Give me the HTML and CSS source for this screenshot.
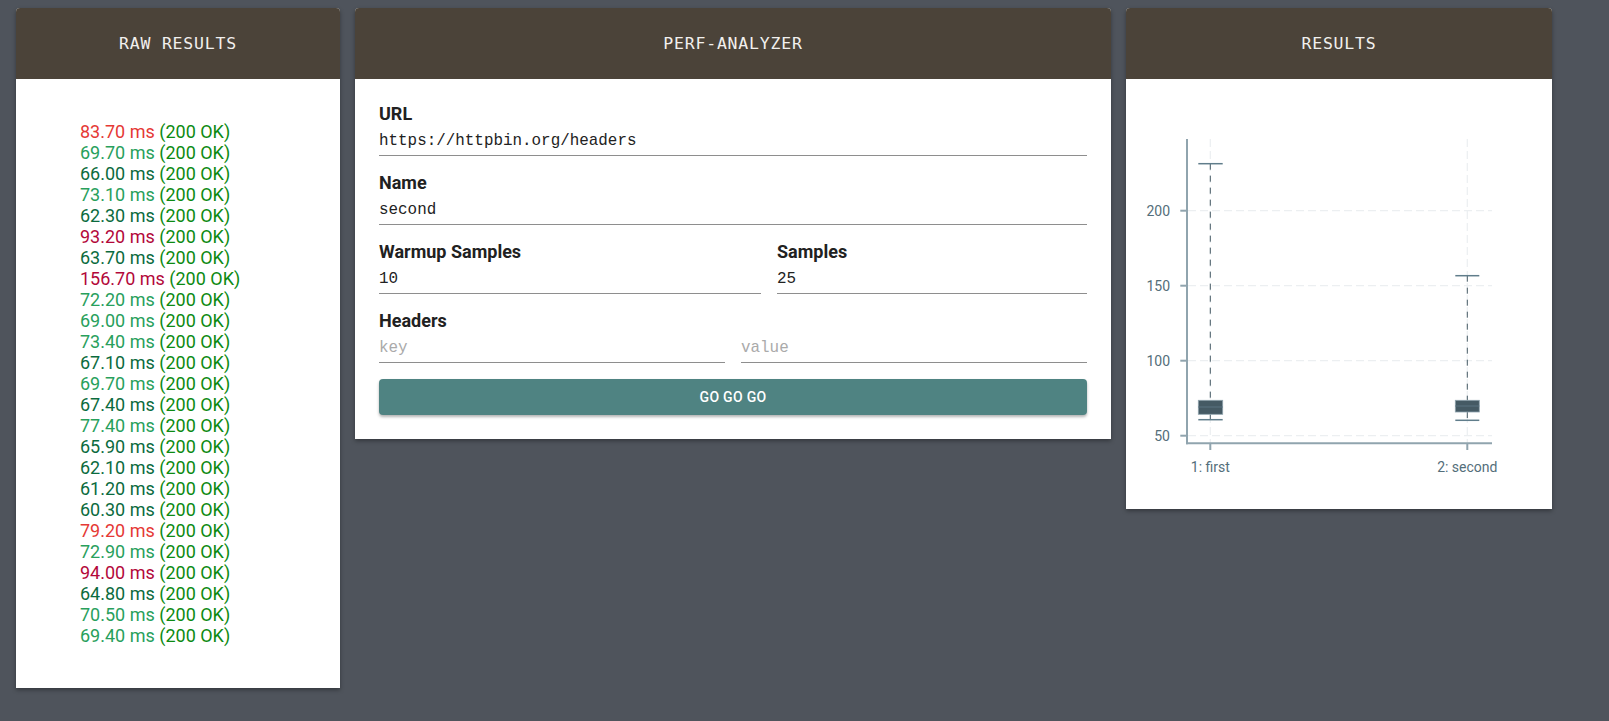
FILE: index.html
```html
<!DOCTYPE html>
<html>
<head>
<meta charset="utf-8">
<link rel="stylesheet" href="styles.css">
</head>
<body>
<div class="layout">
  <section class="card card-raw">
    <header class="card-head">RAW RESULTS</header>
    <div class="card-body raw-body">
      <ul class="raw-list">
        <li><span class="t-red">83.70 ms</span> <span class="ok">(200 OK)</span></li>
        <li><span class="t-light">69.70 ms</span> <span class="ok">(200 OK)</span></li>
        <li><span class="t-dark">66.00 ms</span> <span class="ok">(200 OK)</span></li>
        <li><span class="t-light">73.10 ms</span> <span class="ok">(200 OK)</span></li>
        <li><span class="t-dark">62.30 ms</span> <span class="ok">(200 OK)</span></li>
        <li><span class="t-crimson">93.20 ms</span> <span class="ok">(200 OK)</span></li>
        <li><span class="t-dark">63.70 ms</span> <span class="ok">(200 OK)</span></li>
        <li><span class="t-crimson">156.70 ms</span> <span class="ok">(200 OK)</span></li>
        <li><span class="t-light">72.20 ms</span> <span class="ok">(200 OK)</span></li>
        <li><span class="t-light">69.00 ms</span> <span class="ok">(200 OK)</span></li>
        <li><span class="t-light">73.40 ms</span> <span class="ok">(200 OK)</span></li>
        <li><span class="t-dark">67.10 ms</span> <span class="ok">(200 OK)</span></li>
        <li><span class="t-light">69.70 ms</span> <span class="ok">(200 OK)</span></li>
        <li><span class="t-dark">67.40 ms</span> <span class="ok">(200 OK)</span></li>
        <li><span class="t-light">77.40 ms</span> <span class="ok">(200 OK)</span></li>
        <li><span class="t-dark">65.90 ms</span> <span class="ok">(200 OK)</span></li>
        <li><span class="t-dark">62.10 ms</span> <span class="ok">(200 OK)</span></li>
        <li><span class="t-dark">61.20 ms</span> <span class="ok">(200 OK)</span></li>
        <li><span class="t-dark">60.30 ms</span> <span class="ok">(200 OK)</span></li>
        <li><span class="t-red">79.20 ms</span> <span class="ok">(200 OK)</span></li>
        <li><span class="t-light">72.90 ms</span> <span class="ok">(200 OK)</span></li>
        <li><span class="t-crimson">94.00 ms</span> <span class="ok">(200 OK)</span></li>
        <li><span class="t-dark">64.80 ms</span> <span class="ok">(200 OK)</span></li>
        <li><span class="t-light">70.50 ms</span> <span class="ok">(200 OK)</span></li>
        <li><span class="t-light">69.40 ms</span> <span class="ok">(200 OK)</span></li>
      </ul>
    </div>
  </section>

  <section class="card card-form">
    <header class="card-head">PERF-ANALYZER</header>
    <div class="card-body form-body">
      <div class="field">
        <label class="field-label">URL</label>
        <input class="field-input" type="text" value="https://httpbin.org/headers">
      </div>
      <div class="field">
        <label class="field-label">Name</label>
        <input class="field-input" type="text" value="second">
      </div>
      <div class="field-row">
        <div class="field field-warmup">
          <label class="field-label">Warmup Samples</label>
          <input class="field-input" type="text" value="10">
        </div>
        <div class="field field-grow">
          <label class="field-label">Samples</label>
          <input class="field-input" type="text" value="25">
        </div>
      </div>
      <div class="field">
        <label class="field-label">Headers</label>
        <div class="field-row tight">
          <input class="field-input half" type="text" placeholder="key">
          <input class="field-input half" type="text" placeholder="value">
        </div>
      </div>
      <button class="go-btn" type="button">GO GO GO</button>
    </div>
  </section>

  <section class="card card-chart">
    <header class="card-head">RESULTS</header>
    <div class="card-body chart-body">
      <svg class="chart" width="426" height="430" viewBox="0 0 426 430">
        <g class="grid">
          <line x1="62" y1="131.7" x2="366" y2="131.7"/>
          <line x1="62" y1="206.7" x2="366" y2="206.7"/>
          <line x1="62" y1="281.7" x2="366" y2="281.7"/>
          <line x1="62" y1="356.7" x2="366" y2="356.7"/>
          <line x1="84.3" y1="60" x2="84.3" y2="364"/>
          <line x1="341.3" y1="60" x2="341.3" y2="364"/>
        </g>
        <g class="ticks">
          <line x1="54.3" y1="131.7" x2="61" y2="131.7"/>
          <line x1="54.3" y1="206.7" x2="61" y2="206.7"/>
          <line x1="54.3" y1="281.7" x2="61" y2="281.7"/>
          <line x1="54.3" y1="356.7" x2="61" y2="356.7"/>
          <line x1="84.3" y1="365" x2="84.3" y2="371"/>
          <line x1="341.3" y1="365" x2="341.3" y2="371"/>
        </g>
        <g class="ylabels">
          <text x="44" y="136.5">200</text>
          <text x="44" y="211.5">150</text>
          <text x="44" y="286.5">100</text>
          <text x="44" y="361.5">50</text>
        </g>
        <g class="xlabels">
          <text x="84.3" y="393">1: first</text>
          <text x="341.3" y="393">2: second</text>
        </g>
        <g class="whisker">
          <line x1="84.3" y1="84.7" x2="84.3" y2="321.3"/>
          <line x1="84.3" y1="335.3" x2="84.3" y2="340.7"/>
          <line x1="341.3" y1="196.7" x2="341.3" y2="321.3"/>
          <line x1="341.3" y1="333" x2="341.3" y2="341.3"/>
        </g>
        <g class="caps">
          <line x1="72.3" y1="84.7" x2="96.7" y2="84.7"/>
          <line x1="72.3" y1="340.7" x2="96.7" y2="340.7"/>
          <line x1="329.3" y1="196.7" x2="353.3" y2="196.7"/>
          <line x1="329.3" y1="341.3" x2="353.3" y2="341.3"/>
        </g>
        <g class="boxes">
          <rect x="72.3" y="321.3" width="24.4" height="14"/>
          <rect x="329.3" y="321.3" width="24" height="11.7"/>
        </g>
        <g class="medians">
          <line x1="72.3" y1="328" x2="96.7" y2="328"/>
          <line x1="329.3" y1="327" x2="353.3" y2="327"/>
        </g>
        <g class="axes">
          <line x1="61" y1="60" x2="61" y2="365.3"/>
          <line x1="60" y1="364.3" x2="366" y2="364.3"/>
        </g>
      </svg>
    </div>
  </section>
</div>
</body>
</html>
```

FILE: styles.css
```css
html, body {
  margin: 0;
  padding: 0;
}

body {
  background: #4f545c;
  font-family: Roboto, "Noto Sans", sans-serif;
  width: 1609px;
  height: 721px;
  overflow: hidden;
}

.layout {
  display: flex;
  align-items: flex-start;
  gap: 15px;
  padding: 8px 0 0 16px;
}

.card {
  background: #ffffff;
  border-radius: 4px 4px 0 0;
  box-shadow: 0 2px 4px rgba(0, 0, 0, 0.35);
  flex: none;
}

.card-raw { width: 324px; }
.card-form { width: 756px; }
.card-chart { width: 426px; }

.card-head {
  height: 71px;
  background: #4b4339;
  border-radius: 4px 4px 0 0;
  color: #f2f0ee;
  font-family: "DejaVu Sans Mono", "Liberation Mono", monospace;
  font-size: 16.5px;
  letter-spacing: 0.8px;
  display: flex;
  align-items: center;
  justify-content: center;
}

/* raw list */
.raw-body {
  padding: 42px 0 42px 64px;
}

.raw-list {
  list-style: none;
  margin: 0;
  padding: 0;
  font-size: 18px;
  line-height: 21px;
}

.t-red { color: #e53935; }
.t-light { color: #28a05c; }
.t-dark { color: #0b6b3e; }
.t-crimson { color: #b3083a; }
.ok { color: #0d8a12; }

/* form */
.form-body {
  padding: 24px 24px 24px 24px;
  display: flex;
  flex-direction: column;
}

.field {
  display: flex;
  flex-direction: column;
  margin-bottom: 16px;
}

.field-label {
  font-weight: 700;
  font-size: 18px;
  line-height: 21px;
  color: #212121;
}

.field-input {
  box-sizing: border-box;
  height: 32px;
  border: 0;
  border-bottom: 1px solid #8e8e8e;
  padding: 2px 0 0 0;
  margin: 0;
  font-family: "Liberation Mono", "DejaVu Sans Mono", monospace;
  font-size: 15.9px;
  color: #222;
  background: transparent;
  outline: none;
  width: 100%;
}

.field-input::placeholder {
  color: #aaaaaa;
}

.field-row {
  display: flex;
  gap: 16px;
}

.field-row .field { margin-bottom: 16px; }

.field-warmup { width: 382px; flex: none; }
.field-grow { flex: 1; }

.half { flex: 1; width: auto; min-width: 0; }

.go-btn {
  height: 36px;
  border: 0;
  border-radius: 4px;
  background: #4f8382;
  color: #ffffff;
  font-family: Roboto, sans-serif;
  font-weight: 500;
  font-size: 14px;
  letter-spacing: 0.3px;
  box-shadow: 0 2px 3px rgba(0, 0, 0, 0.3);
  padding: 0;
}

/* chart */
.chart-body {
  height: 430px;
}

.chart {
  display: block;
}

.grid line {
  stroke: #eceff1;
  stroke-width: 1.2;
  stroke-dasharray: 8 4;
}

.ticks line,
.axes line {
  stroke: #90a4ae;
  stroke-width: 2;
}

.ylabels text {
  font-family: Roboto, sans-serif;
  font-size: 14px;
  fill: #546e7a;
  text-anchor: end;
}

.xlabels text {
  font-family: Roboto, sans-serif;
  font-size: 14px;
  fill: #546e7a;
  text-anchor: middle;
}

.whisker line {
  stroke: #455a64;
  stroke-width: 1;
  stroke-dasharray: 6 6;
}

.caps line {
  stroke: #607d8b;
  stroke-width: 1.5;
}

.boxes rect {
  fill: #455a64;
  stroke: #90a4ae;
  stroke-width: 0.8;
}

.medians line {
  stroke: #5b7280;
  stroke-width: 1;
}
```
